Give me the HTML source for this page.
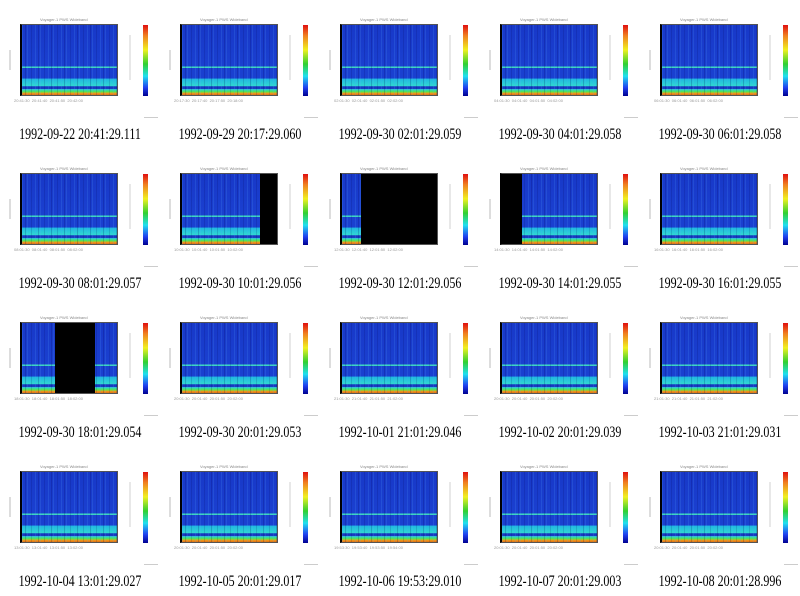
<!DOCTYPE html>
<html><head><meta charset="utf-8"><style>
body{margin:0;width:800px;height:596px;background:#fff;position:relative;overflow:hidden;font-family:"Liberation Serif",serif}
.c{position:absolute;width:160px;height:149px}
.p{position:absolute;left:20px;top:24px;width:98px;height:72px;border:1px solid #555;border-left:2px solid #000;box-sizing:border-box;
background:
repeating-linear-gradient(90deg,rgba(80,160,255,.18) 0 1px,transparent 1px 3px,rgba(0,0,90,.2) 3px 4px,transparent 4px 5px,rgba(100,180,255,.15) 5px 6px,transparent 6px 9px,rgba(0,0,80,.15) 9px 10px,transparent 10px 13px),
linear-gradient(#1838c8 0,#1a40d0 59%,#40e0c0 59.5%,#40e0c0 61%,#1a40d0 61.5%,#1a40d0 76%,#20b8e0 77%,#30d8d0 87%,#1838c0 88%,#1838c0 91%,#30d0e0 92%,#40e080 94%,#60e040 96%,#f0a020 97%,#e07010 100%)}
.b{position:absolute;top:0;bottom:0;background:#000}
.t{position:absolute;left:40px;top:17px;font:4px "Liberation Sans",sans-serif;color:#888}
.x{position:absolute;left:14px;top:98px;font:4px "Liberation Sans",sans-serif;color:#999;white-space:pre}
.cb{position:absolute;left:143px;top:25px;width:5px;height:71px;background:linear-gradient(#e01010,#f08020 15%,#f0f020 35%,#30d030 55%,#20e0f0 72%,#2040f0 88%,#000090)}
.yl{position:absolute;left:9px;top:50px;width:2px;height:20px;background:#ddd}
.yl2{position:absolute;left:129px;top:35px;width:2px;height:45px;background:#e8e8e8}
.l{position:absolute;left:-40px;width:240px;text-align:center;top:126px;font-size:16px;color:#000;transform:scaleX(0.75);white-space:nowrap}
.s{position:absolute;left:144px;top:117px;width:14px;height:1px;background:#ccc}
</style></head><body>
<div class="c" style="left:0;top:0"><div class="t">Voyager-1 PWS Wideband</div><div class="yl"></div><div class="p"></div><div class="yl2"></div><div class="cb"></div><div class="x">20:41:30  20:41:40  20:41:50  20:42:00</div><div class="s"></div><div class="l">1992-09-22 20:41:29.111</div></div>
<div class="c" style="left:160px;top:0"><div class="t">Voyager-1 PWS Wideband</div><div class="yl"></div><div class="p"></div><div class="yl2"></div><div class="cb"></div><div class="x">20:17:30  20:17:40  20:17:50  20:18:00</div><div class="s"></div><div class="l">1992-09-29 20:17:29.060</div></div>
<div class="c" style="left:320px;top:0"><div class="t">Voyager-1 PWS Wideband</div><div class="yl"></div><div class="p"></div><div class="yl2"></div><div class="cb"></div><div class="x">02:01:30  02:01:40  02:01:50  02:02:00</div><div class="s"></div><div class="l">1992-09-30 02:01:29.059</div></div>
<div class="c" style="left:480px;top:0"><div class="t">Voyager-1 PWS Wideband</div><div class="yl"></div><div class="p"></div><div class="yl2"></div><div class="cb"></div><div class="x">04:01:30  04:01:40  04:01:50  04:02:00</div><div class="s"></div><div class="l">1992-09-30 04:01:29.058</div></div>
<div class="c" style="left:640px;top:0"><div class="t">Voyager-1 PWS Wideband</div><div class="yl"></div><div class="p"></div><div class="yl2"></div><div class="cb"></div><div class="x">06:01:30  06:01:40  06:01:50  06:02:00</div><div class="s"></div><div class="l">1992-09-30 06:01:29.058</div></div>

<div class="c" style="left:0;top:149px"><div class="t">Voyager-1 PWS Wideband</div><div class="yl"></div><div class="p"></div><div class="yl2"></div><div class="cb"></div><div class="x">08:01:30  08:01:40  08:01:50  08:02:00</div><div class="s"></div><div class="l">1992-09-30 08:01:29.057</div></div>
<div class="c" style="left:160px;top:149px"><div class="t">Voyager-1 PWS Wideband</div><div class="yl"></div><div class="p"><div class="b" style="left:78px;right:0"></div></div><div class="yl2"></div><div class="cb"></div><div class="x">10:01:30  10:01:40  10:01:50  10:02:00</div><div class="s"></div><div class="l">1992-09-30 10:01:29.056</div></div>
<div class="c" style="left:320px;top:149px"><div class="t">Voyager-1 PWS Wideband</div><div class="yl"></div><div class="p"><div class="b" style="left:19px;right:0"></div></div><div class="yl2"></div><div class="cb"></div><div class="x">12:01:30  12:01:40  12:01:50  12:02:00</div><div class="s"></div><div class="l">1992-09-30 12:01:29.056</div></div>
<div class="c" style="left:480px;top:149px"><div class="t">Voyager-1 PWS Wideband</div><div class="yl"></div><div class="p"><div class="b" style="left:0;width:20px"></div></div><div class="yl2"></div><div class="cb"></div><div class="x">14:01:30  14:01:40  14:01:50  14:02:00</div><div class="s"></div><div class="l">1992-09-30 14:01:29.055</div></div>
<div class="c" style="left:640px;top:149px"><div class="t">Voyager-1 PWS Wideband</div><div class="yl"></div><div class="p"></div><div class="yl2"></div><div class="cb"></div><div class="x">16:01:30  16:01:40  16:01:50  16:02:00</div><div class="s"></div><div class="l">1992-09-30 16:01:29.055</div></div>

<div class="c" style="left:0;top:298px"><div class="t">Voyager-1 PWS Wideband</div><div class="yl"></div><div class="p"><div class="b" style="left:33px;width:40px"></div></div><div class="yl2"></div><div class="cb"></div><div class="x">18:01:30  18:01:40  18:01:50  18:02:00</div><div class="s"></div><div class="l">1992-09-30 18:01:29.054</div></div>
<div class="c" style="left:160px;top:298px"><div class="t">Voyager-1 PWS Wideband</div><div class="yl"></div><div class="p"></div><div class="yl2"></div><div class="cb"></div><div class="x">20:01:30  20:01:40  20:01:50  20:02:00</div><div class="s"></div><div class="l">1992-09-30 20:01:29.053</div></div>
<div class="c" style="left:320px;top:298px"><div class="t">Voyager-1 PWS Wideband</div><div class="yl"></div><div class="p"></div><div class="yl2"></div><div class="cb"></div><div class="x">21:01:30  21:01:40  21:01:50  21:02:00</div><div class="s"></div><div class="l">1992-10-01 21:01:29.046</div></div>
<div class="c" style="left:480px;top:298px"><div class="t">Voyager-1 PWS Wideband</div><div class="yl"></div><div class="p"></div><div class="yl2"></div><div class="cb"></div><div class="x">20:01:30  20:01:40  20:01:50  20:02:00</div><div class="s"></div><div class="l">1992-10-02 20:01:29.039</div></div>
<div class="c" style="left:640px;top:298px"><div class="t">Voyager-1 PWS Wideband</div><div class="yl"></div><div class="p"></div><div class="yl2"></div><div class="cb"></div><div class="x">21:01:30  21:01:40  21:01:50  21:02:00</div><div class="s"></div><div class="l">1992-10-03 21:01:29.031</div></div>

<div class="c" style="left:0;top:447px"><div class="t">Voyager-1 PWS Wideband</div><div class="yl"></div><div class="p"></div><div class="yl2"></div><div class="cb"></div><div class="x">13:01:30  13:01:40  13:01:50  13:02:00</div><div class="s"></div><div class="l">1992-10-04 13:01:29.027</div></div>
<div class="c" style="left:160px;top:447px"><div class="t">Voyager-1 PWS Wideband</div><div class="yl"></div><div class="p"></div><div class="yl2"></div><div class="cb"></div><div class="x">20:01:30  20:01:40  20:01:50  20:02:00</div><div class="s"></div><div class="l">1992-10-05 20:01:29.017</div></div>
<div class="c" style="left:320px;top:447px"><div class="t">Voyager-1 PWS Wideband</div><div class="yl"></div><div class="p"></div><div class="yl2"></div><div class="cb"></div><div class="x">19:53:30  19:53:40  19:53:50  19:54:00</div><div class="s"></div><div class="l">1992-10-06 19:53:29.010</div></div>
<div class="c" style="left:480px;top:447px"><div class="t">Voyager-1 PWS Wideband</div><div class="yl"></div><div class="p"></div><div class="yl2"></div><div class="cb"></div><div class="x">20:01:30  20:01:40  20:01:50  20:02:00</div><div class="s"></div><div class="l">1992-10-07 20:01:29.003</div></div>
<div class="c" style="left:640px;top:447px"><div class="t">Voyager-1 PWS Wideband</div><div class="yl"></div><div class="p"></div><div class="yl2"></div><div class="cb"></div><div class="x">20:01:30  20:01:40  20:01:50  20:02:00</div><div class="s"></div><div class="l">1992-10-08 20:01:28.996</div></div>
</body></html>
